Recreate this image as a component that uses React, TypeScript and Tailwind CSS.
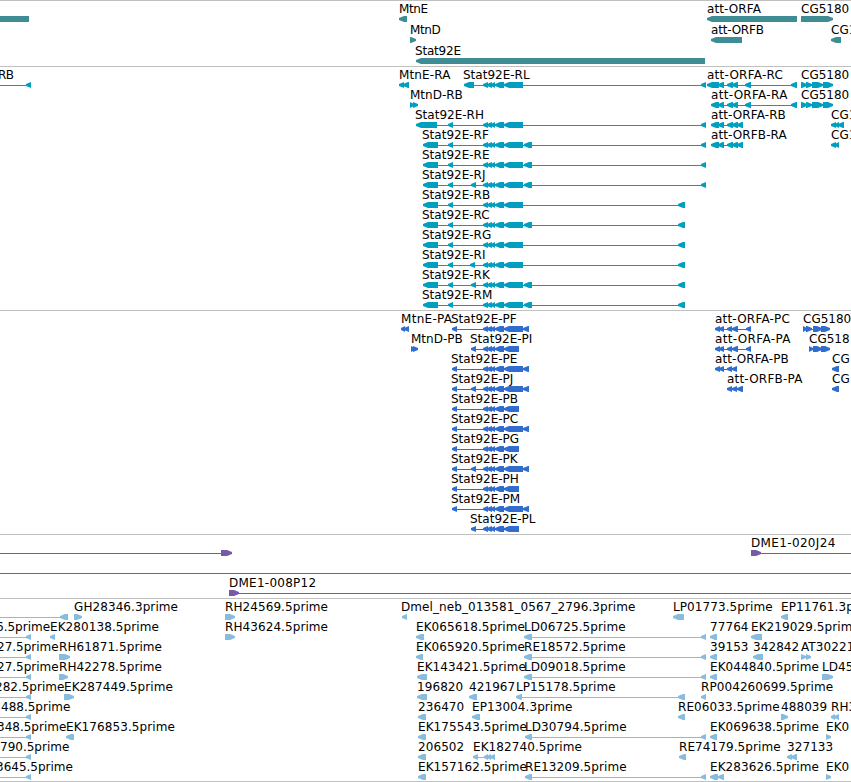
type Span = [number, number];

type Feature = {
  label?: string;
  x?: number;
  tracking?: number;
  dir?: 'left' | 'right';
  line?: Span;
  blocks?: Span[];
};

type Track = {
  id: string;
  color: string;
  rowClass: string;
  heightClass: string;
  rows: Feature[][];
};

const VIEW_WIDTH = 851;

// Exons shared by the Stat92E isoforms
const core: Span[] = [[483, 488], [487, 492], [491, 495], [495, 504]];
const body: Span = [504, 523];
const tail: Span = [524, 532];
const farEnd: Span = [701, 706];
const nearEnd: Span = [678, 685];

const stat = (suffix: string, ...extra: Span[]): Feature => ({
  label: `Stat92E-${suffix}`,
  x: 422,
  blocks: [[423, 438], [448, 453], ...core, body, ...extra]
});

const statProtein = (suffix: string, long: boolean, ...extra: Span[]): Feature => ({
  label: `Stat92E-${suffix}`,
  x: 451,
  blocks: [[452, 457], ...extra, ...core, ...(long ? ([body, [523, 529]] as Span[]) : ([[504, 519]] as Span[]))]
});

const shortProtein = (suffix: string): Feature => ({
  label: `Stat92E-${suffix}`,
  x: 470,
  blocks: [[471, 476], ...core, [504, 519]]
});

const est = (label: string, x: number, blocks: Span[], dir: 'left' | 'right' = 'left'): Feature => ({
  label,
  x,
  tracking: 0.08,
  blocks,
  dir
});

const clipped = (label: string, x: number): Feature => ({ label, x, line: [0, 31], blocks: [[26, 31]] });

const orfHead: Span[] = [[711, 719], [718, 724], [727, 733], [732, 738]];

const tracks: Track[] = [
  {
    id: 'genes',
    color: '#408c94',
    rowClass: 'relative h-[21px]',
    heightClass: 'h-[66px]',
    rows: [
      [
        { blocks: [[-20, 29]] },
        { label: 'MtnE', x: 399, tracking: -0.4, blocks: [[399, 407]] },
        { label: 'att-ORFA', x: 707, tracking: 0.1, blocks: [[707, 797]] },
        { label: 'CG5180', x: 801, dir: 'right', blocks: [[801, 833]] }
      ],
      [
        { label: 'MtnD', x: 410, tracking: -0.4, dir: 'right', blocks: [[410, 416]] },
        { label: 'att-ORFB', x: 711, tracking: -0.2, blocks: [[711, 742]] },
        { label: 'CG1', x: 831, blocks: [[831, 841]] }
      ],
      [{ label: 'Stat92E', x: 415, tracking: -0.2, blocks: [[416, 705]] }]
    ]
  },
  {
    id: 'transcripts',
    color: '#009fbf',
    rowClass: 'relative h-[20px]',
    heightClass: 'h-[244px]',
    rows: [
      [
        { label: 'RB', x: -2, tracking: -0.5, line: [0, 31], blocks: [[26, 31]] },
        { label: 'MtnE-RA', x: 399, tracking: 0.15, blocks: [[399, 404], [403, 409]] },
        { label: 'Stat92E-RL', x: 463, blocks: [[464, 474], ...core, body, farEnd] },
        {
          label: 'att-ORFA-RC',
          x: 707,
          tracking: 0.25,
          blocks: [[707, 719], [718, 724], [727, 733], [732, 738], [745, 751], [791, 797]]
        },
        { label: 'CG5180', x: 801, dir: 'right', blocks: [[801, 807], [806, 812], [812, 823], [823, 833]] }
      ],
      [
        { label: 'MtnD-RB', x: 410, dir: 'right', blocks: [[410, 414], [413, 418]] },
        { label: 'att-ORFA-RA', x: 711, tracking: 0.3, blocks: [...orfHead, [745, 751], [791, 797]] },
        { label: 'CG5180', x: 801, dir: 'right', blocks: [[801, 807], [806, 812], [812, 823], [823, 833]] }
      ],
      [
        { label: 'Stat92E-RH', x: 415, blocks: [[416, 437], [448, 453], ...core, body, farEnd] },
        { label: 'att-ORFA-RB', x: 711, tracking: 0.1, blocks: [...orfHead, [737, 743]] },
        { label: 'CG1', x: 831, blocks: [[831, 836], [835, 839], [838, 844]] }
      ],
      [
        stat('RF', tail, farEnd),
        { label: 'att-ORFB-RA', x: 711, tracking: 0.1, blocks: [...orfHead, [737, 743]] },
        { label: 'CG1', x: 831, blocks: [[831, 836], [835, 839]] }
      ],
      [stat('RE', tail, farEnd)],
      [stat('RJ', [471, 476], tail, farEnd)],
      [stat('RB', nearEnd)],
      [stat('RC', tail, nearEnd)],
      [stat('RG', nearEnd)],
      [stat('RI', [470, 475], nearEnd)],
      [stat('RK', [471, 476], tail, nearEnd)],
      [stat('RM', tail, nearEnd)]
    ]
  },
  {
    id: 'proteins',
    color: '#316dcf',
    rowClass: 'relative h-[20px]',
    heightClass: 'h-[224px]',
    rows: [
      [
        { label: 'MtnE-PA', x: 401, tracking: 0.3, blocks: [[401, 405], [404, 409]] },
        statProtein('PF', true),
        {
          label: 'att-ORFA-PC',
          x: 715,
          tracking: 0.2,
          blocks: [[715, 720], [719, 724], [727, 732], [732, 738], [746, 751]]
        },
        { label: 'CG5180', x: 803, dir: 'right', blocks: [[803, 807], [806, 812], [813, 822], [821, 830]] }
      ],
      [
        { label: 'MtnD-PB', x: 411, dir: 'right', blocks: [[411, 415], [413, 418]] },
        shortProtein('PI'),
        {
          label: 'att-ORFA-PA',
          x: 715,
          tracking: 0.35,
          blocks: [[715, 720], [719, 724], [727, 732], [732, 738], [746, 751]]
        },
        { label: 'CG518', x: 809, dir: 'right', blocks: [[809, 813], [813, 822], [821, 830]] }
      ],
      [
        statProtein('PE', true),
        { label: 'att-ORFA-PB', x: 715, tracking: 0.1, blocks: [[715, 720], [719, 724], [727, 732], [732, 737]] },
        { label: 'CG', x: 832, blocks: [[832, 839]] }
      ],
      [
        statProtein('PJ', true, [471, 476]),
        { label: 'att-ORFB-PA', x: 727, tracking: 0.2, blocks: [[727, 732], [732, 737], [737, 743]] },
        { label: 'CG', x: 832, blocks: [[832, 839]] }
      ],
      [statProtein('PB', false)],
      [statProtein('PC', true)],
      [statProtein('PG', false)],
      [statProtein('PK', true, [471, 476])],
      [statProtein('PH', false)],
      [statProtein('PM', true)],
      [shortProtein('PL')]
    ]
  },
  {
    id: 'bacs',
    color: '#7659a8',
    rowClass: 'relative h-[20px]',
    heightClass: 'h-[64px]',
    rows: [
      [
        { dir: 'right', line: [0, 232], blocks: [[221, 232]] },
        { label: 'DME1-020J24', x: 751, tracking: 0.35, dir: 'right', line: [751, 851], blocks: [[751, 761]] }
      ],
      [{ line: [0, 851] }],
      [{ label: 'DME1-008P12', x: 229, tracking: 0.25, dir: 'right', line: [229, 851], blocks: [[229, 239]] }]
    ]
  },
  {
    id: 'ests',
    color: '#88bcdd',
    rowClass: 'relative h-[20px]',
    heightClass: 'h-[184px] border-b',
    rows: [
      [
        { line: [0, 68], blocks: [[60, 68]] },
        est('GH28346.3prime', 74, [[74, 82]], 'right'),
        est('RH24569.5prime', 225, [[225, 235]], 'right'),
        { label: 'Dmel_neb_013581_0567_2796.3prime', x: 401, tracking: 0.09, blocks: [[402, 407]] },
        est('LP01773.5prime', 673, [[673, 684]]),
        est('EP11761.3prime', 781, [[781, 788]])
      ],
      [
        clipped('6.5prime', -4),
        est('EK280138.5prime', 50, [[50, 55]]),
        est('RH43624.5prime', 225, [[225, 235]], 'right'),
        est('EK065618.5prime', 416, [[416, 424]]),
        est('LD06725.5prime', 524, [[524, 532], farEnd]),
        est('77764', 710, [[710, 717]]),
        est('EK219029.5prime', 751, [[751, 762]])
      ],
      [
        clipped('27.5prime', -3),
        est('RH61871.5prime', 59, [[59, 70]], 'right'),
        est('EK065920.5prime', 416, [[416, 423]]),
        est('RE18572.5prime', 524, [[524, 532], farEnd]),
        est('39153', 710, [[710, 717]]),
        est('342842', 753, [[753, 763]]),
        est('AT30221', 801, [[801, 806], [806, 811]], 'right')
      ],
      [
        clipped('27.5prime', -3),
        est('RH42278.5prime', 59, [[59, 68]], 'right'),
        est('EK143421.5prime', 417, [[417, 427]]),
        est('LD09018.5prime', 524, [[524, 532], farEnd]),
        est('EK044840.5prime', 710, [[710, 717]]),
        est('LD45', 822, [[822, 833]], 'right')
      ],
      [
        clipped('282.5prime', -5),
        est('EK287449.5prime', 64, [[64, 74]], 'right'),
        est('196820', 417, [[417, 427]]),
        est('421967', 469, [[469, 477]]),
        est('LP15178.5prime', 516, [[516, 522], [678, 685]]),
        est('RP004260699.5prime', 701, [[701, 706]])
      ],
      [
        clipped('488.5prime', 1),
        est('236470', 418, [[418, 426]]),
        est('EP13004.3prime', 472, [[472, 480]]),
        est('RE06033.5prime', 678, [[678, 685]]),
        est('488039', 781, [[781, 788]], 'right'),
        est('RH3', 831, [[831, 835], [834, 839]])
      ],
      [
        clipped('348.5prime', -3),
        est('EK176853.5prime', 66, [[66, 74]]),
        est('EK175543.5prime', 418, [[418, 426]]),
        est('LD30794.5prime', 525, [[525, 532], farEnd]),
        est('EK069638.5prime', 710, [[710, 717]]),
        est('EK0', 826, [[826, 831]], 'right')
      ],
      [
        clipped('790.5prime', 0),
        est('206502', 418, [[418, 426]]),
        est('EK182740.5prime', 473, [[473, 478], [484, 488], [487, 491], [490, 495]]),
        est('RE74179.5prime', 679, [[679, 686]]),
        est('327133', 787, [[787, 792], [791, 797]])
      ],
      [
        clipped('3645.5prime', -4),
        est('EK157162.5prime', 418, [[418, 426]]),
        est('RE13209.5prime', 525, [[525, 532], farEnd]),
        est('EK283626.5prime', 710, [[710, 718], [718, 724]]),
        est('EK0', 826, [[826, 831]], 'right')
      ]
    ]
  }
];

// Blunt tip: 2px high at the point, full height after 5px
function arrowPoints([start, end]: Span, dir: 'left' | 'right') {
  const head = Math.min(5, end - start);
  if (dir === 'right') {
    return `${start},0 ${end - head},0 ${end},2 ${end},4 ${end - head},6 ${start},6`;
  }
  return `${end},0 ${start + head},0 ${start},2 ${start},4 ${start + head},6 ${end},6`;
}

function Glyph({ feature }: { feature: Feature }) {
  const blocks = feature.blocks ?? [];
  const dir = feature.dir ?? 'left';
  const [from, to] = feature.line ?? [blocks[0][0], blocks[blocks.length - 1][1]];
  return (
    <g>
      {feature.line || blocks.length > 1 ? <rect x={from} y={3} width={to - from} height={1} shapeRendering="crispEdges" /> : null}
      {blocks.map((block) => (
        <polygon key={block[0]} points={arrowPoints(block, dir)} />
      ))}
    </g>
  );
}

function TrackRow({ features, color, className }: { features: Feature[]; color: string; className: string }) {
  return (
    <div className={className}>
      <svg className="absolute left-0 top-[15px]" width={VIEW_WIDTH} height={6} fill={color}>
        {features.map((feature, i) => (
          <Glyph key={i} feature={feature} />
        ))}
      </svg>
      {features.map((feature, i) =>
        feature.label ? (
          <span
            key={i}
            className="absolute top-px whitespace-nowrap"
            style={{ left: feature.x, letterSpacing: feature.tracking }}
          >
            {feature.label}
          </span>
        ) : null
      )}
    </div>
  );
}

export default function App() {
  return (
    <main className="flex h-[782px] w-[851px] flex-col overflow-hidden bg-white font-['DejaVu_Sans',sans-serif] text-[12px] leading-[14px] text-black">
      {tracks.map((track) => (
        <section key={track.id} className={`${track.heightClass} shrink-0 border-t border-[#c0c0c0]`}>
          {track.rows.map((features, i) => (
            <TrackRow key={i} features={features} color={track.color} className={track.rowClass} />
          ))}
        </section>
      ))}
    </main>
  );
}
